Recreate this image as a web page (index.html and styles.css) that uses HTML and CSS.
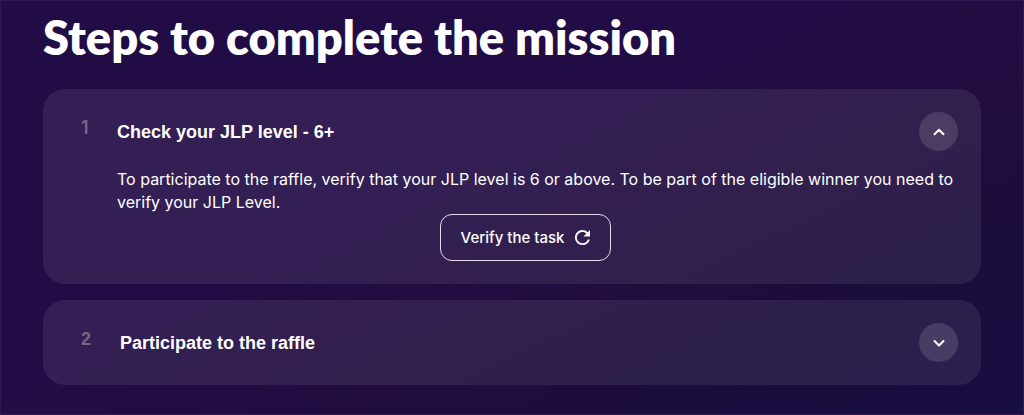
FILE: index.html
```html
<!DOCTYPE html>
<html lang="en">
<head>
<meta charset="utf-8">
<meta name="viewport" content="width=device-width, initial-scale=1">
<title>Mission steps</title>
<link rel="stylesheet" href="styles.css">
</head>
<body>
<main class="mission">
  <h1 class="mission-title">Steps to complete the mission</h1>
  <ol class="steps">
    <li class="step">
      <span class="step-number step-number-active">1</span>
      <h2 class="step-title">Check your JLP level - 6+</h2>
      <button class="toggle" type="button" aria-expanded="true" aria-controls="step-1" aria-label="Collapse step 1">
        <svg class="chevron" viewBox="0 0 16 16" aria-hidden="true"><path d="M3.500 10.300 8 5.800 12.500 10.300"/></svg>
      </button>
      <div class="step-body" id="step-1">
        <p class="step-text">To participate to the raffle, verify that your JLP level is 6 or above. To be part of the eligible winner you need to verify your JLP Level.</p>
      </div>
      <button class="verify" type="button">
        Verify the task
        <svg class="refresh" viewBox="4 4 16 16" aria-hidden="true"><path d="M17.650 6.350A7.958 7.958 0 0 0 12 4c-4.420 0-7.990 3.580-7.990 8s3.570 8 7.990 8c3.730 0 6.840-2.550 7.730-6h-2.080A5.990 5.990 0 0 1 12 18c-3.310 0-6-2.690-6-6s2.690-6 6-6c1.660 0 3.140.69 4.220 1.780L13 11h7V4l-2.350 2.350z"/></svg>
      </button>
    </li>
    <li class="step">
      <span class="step-number">2</span>
      <h2 class="step-title step-title-closed">Participate to the raffle</h2>
      <button class="toggle" type="button" aria-expanded="false" aria-label="Expand step 2">
        <svg class="chevron" viewBox="0 0 16 16" aria-hidden="true"><path d="M3.500 6 8 10.500 12.500 6"/></svg>
      </button>
    </li>
  </ol>
</main>
</body>
</html>
```
FILE: styles.css
```css
* {
  box-sizing: border-box;
}

body {
  margin: 0;
  min-height: 100vh;
  background: linear-gradient(155deg, #220c45 0%, #220c45 45%, #200d3e 65%, #1b0d3c 80%, #190e42 100%);
  color: #fff;
  font-family: Inter, "Liberation Sans", sans-serif;
  border: 1px solid #2c1a50;
}

.mission {
  padding: 4px 42px 29px;
}

.mission-title {
  margin: 0 0 20px;
  font-family: Lato, "Open Sans", sans-serif;
  font-size: 47px;
  line-height: 64px;
  font-weight: 800;
}

.steps {
  display: grid;
  gap: 16px;
  margin: 0;
  padding: 0;
  list-style: none;
}

.step {
  display: grid;
  grid-template-columns: 36px 1fr 39px;
  align-items: center;
  padding: 23px 23px 23px 38px;
  border-radius: 22px;
  background: rgba(255, 255, 255, 0.08);
}

.step-number {
  align-self: start;
  color: #75668a;
  font-family: "Liberation Sans", sans-serif;
  font-size: 18px;
  line-height: 32px;
  font-weight: 700;
}

.step-number-active {
  font-family: Inter, sans-serif;
  font-weight: 600;
}

.step-title {
  margin: 0;
  font-family: "Liberation Sans", sans-serif;
  font-size: 18px;
  line-height: 24px;
  font-weight: 700;
}

.step-title-closed {
  padding-left: 3px;
}

.toggle {
  display: grid;
  place-items: center;
  width: 39px;
  height: 39px;
  padding: 0;
  border: 0;
  border-radius: 50%;
  background: rgba(255, 255, 255, 0.13);
  cursor: pointer;
}

.chevron {
  width: 16px;
  height: 16px;
  fill: none;
  stroke: #fff;
  stroke-width: 2;
  stroke-linecap: round;
  stroke-linejoin: round;
}

.step-body {
  grid-column: 2 / -1;
  padding-top: 17px;
}

.step-text {
  margin: 0;
  font-size: 16px;
  line-height: 23px;
  color: #fff;
}

.verify {
  grid-column: 1 / -1;
  justify-self: center;
  display: inline-flex;
  align-items: center;
  gap: 11px;
  height: 47px;
  margin-left: 12px;
  padding: 0 20px;
  border: 1px solid #e4dcee;
  border-radius: 12px;
  background: transparent;
  color: #fff;
  font-family: inherit;
  font-size: 15px;
  font-weight: 500;
  cursor: pointer;
}

.refresh {
  width: 15px;
  height: 15px;
  fill: currentColor;
}
```
